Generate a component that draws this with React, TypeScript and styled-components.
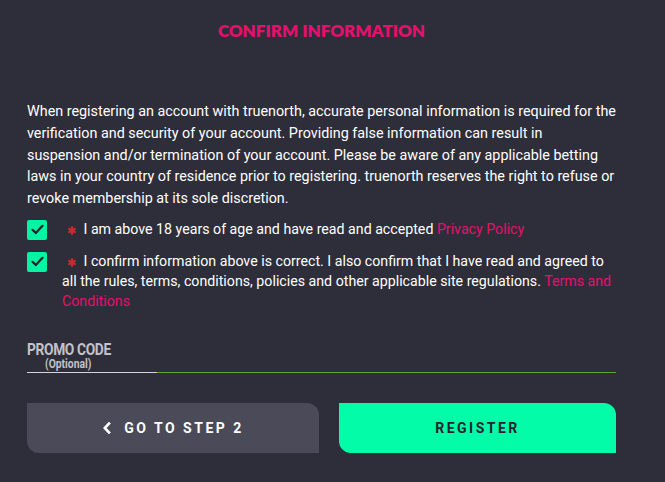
import React, { useState } from 'react';
import styled, { createGlobalStyle } from 'styled-components';

const GlobalStyle = createGlobalStyle`
  html, body {
    margin: 0;
    background: #2e2e3a;
  }
  body {
    font-family: Roboto, "Liberation Sans", sans-serif;
  }
`;

const App: React.FC = () => {
  const [adult, setAdult] = useState(true);
  const [confirm, setConfirm] = useState(true);

  return (
    <>
      <GlobalStyle />
      <Page>
        <Title>CONFIRM INFORMATION</Title>
        <Intro>
          When registering an account with truenorth, accurate personal information is required for the
          verification and security of your account. Providing false information can result in
          suspension and/or termination of your account. Please be aware of any applicable betting
          laws in your country of residence prior to registering. truenorth reserves the right to refuse or
          revoke membership at its sole discretion.
        </Intro>

        <CheckRow>
          <Box checked={adult} onClick={() => setAdult(!adult)}>
            {adult && <CheckMark />}
          </Box>
          <Label>
            <Required /> I am above 18 years of age and have read and accepted <Link>Privacy Policy</Link>
          </Label>
        </CheckRow>

        <CheckRow>
          <Box checked={confirm} onClick={() => setConfirm(!confirm)}>
            {confirm && <CheckMark />}
          </Box>
          <Label>
            <Required /> I confirm information above is correct. I also confirm that I have read and agreed to
            all the rules, terms, conditions, policies and other applicable site regulations.{' '}
            <Link>Terms and Conditions</Link>
          </Label>
        </CheckRow>

        <PromoField>
          <PromoLabel>PROMO CODE</PromoLabel>
          <PromoHint>(Optional)</PromoHint>
          <PromoLine>
            <LineActive />
          </PromoLine>
        </PromoField>

        <Actions>
          <ActionButton variant="back">
            <Chevron />
            GO TO STEP 2
          </ActionButton>
          <ActionButton variant="primary">REGISTER</ActionButton>
        </Actions>
      </Page>
    </>
  );
};

const CheckMark = () => (
  <svg width="13" height="11" viewBox="0 0 13 11" fill="none">
    <path d="M1.5 5.8 L4.8 9 L11.5 1.8" stroke="#1d1f2a" strokeWidth="2.2" strokeLinecap="round" strokeLinejoin="round" />
  </svg>
);

const Required = () => (
  <Star width="8" height="9" viewBox="0 0 8 9">
    <g stroke="#d0282e" strokeWidth="2.1">
      <path d="M4 0.3 V8.7" />
      <path d="M0.4 2.4 L7.6 6.6" />
      <path d="M0.4 6.6 L7.6 2.4" />
    </g>
  </Star>
);

const Chevron = () => (
  <svg width="10" height="12" viewBox="0 0 10 12" fill="none">
    <path d="M7 1.5 L2.8 6 L7 10.5" stroke="#ffffff" strokeWidth="2.6" strokeLinecap="square" />
  </svg>
);

const Page = styled.div`
  padding: 20px 49px 28px 27px;
  color: #ffffff;
`;

const Title = styled.h1`
  margin: 0 0 59px;
  text-align: center;
  font-family: Lato, "Noto Sans", sans-serif;
  font-weight: 800;
  font-size: 17px;
  line-height: 22px;
  color: #e5106c;
`;

const Intro = styled.p`
  margin: 0 0 9px;
  font-size: 14.35px;
  line-height: 21.75px;
  color: #ffffff;
`;

const CheckRow = styled.div`
  display: flex;
  align-items: flex-start;
  gap: 15px;
  margin-bottom: 11px;
`;

const Box = styled.div<{ checked: boolean }>`
  flex: none;
  width: 20px;
  height: 20px;
  margin-top: 1px;
  border-radius: 2px;
  background: ${(p) => (p.checked ? '#03f5a4' : 'transparent')};
  border: ${(p) => (p.checked ? 'none' : '1px solid #888')};
  display: flex;
  align-items: center;
  justify-content: center;
  cursor: pointer;
`;

const Label = styled.div`
  font-size: 14.2px;
  line-height: 20px;
  color: #ffffff;
  text-indent: 6px;
`;

const Star = styled.svg`
  display: inline-block;
  margin-right: 4px;
  vertical-align: -1px;
`;

const Link = styled.a`
  color: #e5106c;
  cursor: pointer;
`;

const PromoField = styled.div`
  margin-top: 30px;
  display: flex;
  flex-direction: column;
`;

const PromoLabel = styled.div`
  font-size: 16px;
  font-weight: 700;
  letter-spacing: -0.4px;
  line-height: 17px;
  color: #c2c2ca;
  transform: scaleX(0.86);
  transform-origin: left center;
`;

const PromoHint = styled.div`
  font-size: 12px;
  font-weight: 700;
  line-height: 13px;
  color: #c2c2ca;
  padding-left: 21px;
  transform: scaleX(0.86);
  transform-origin: left center;
`;

const PromoLine = styled.div`
  margin-top: 1px;
  height: 1px;
  background: #5aa431;
`;

const LineActive = styled.div`
  width: 130px;
  height: 1px;
  background: #d4d4da;
`;

const Actions = styled.div`
  margin-top: 30px;
  display: grid;
  grid-template-columns: 292px 1fr;
  gap: 20px;
`;

const ActionButton = styled.button<{ variant: 'back' | 'primary' }>`
  height: 50px;
  border: none;
  border-radius: 0 12px 0 12px;
  display: flex;
  align-items: center;
  justify-content: center;
  gap: 12px;
  font-family: Roboto, "Liberation Sans", sans-serif;
  font-size: 14px;
  font-weight: 700;
  letter-spacing: 2.5px;
  cursor: pointer;
  background: ${(p) => (p.variant === 'primary' ? '#03fca8' : '#4a4a58')};
  color: ${(p) => (p.variant === 'primary' ? '#23232f' : '#ffffff')};
`;

export default App;
